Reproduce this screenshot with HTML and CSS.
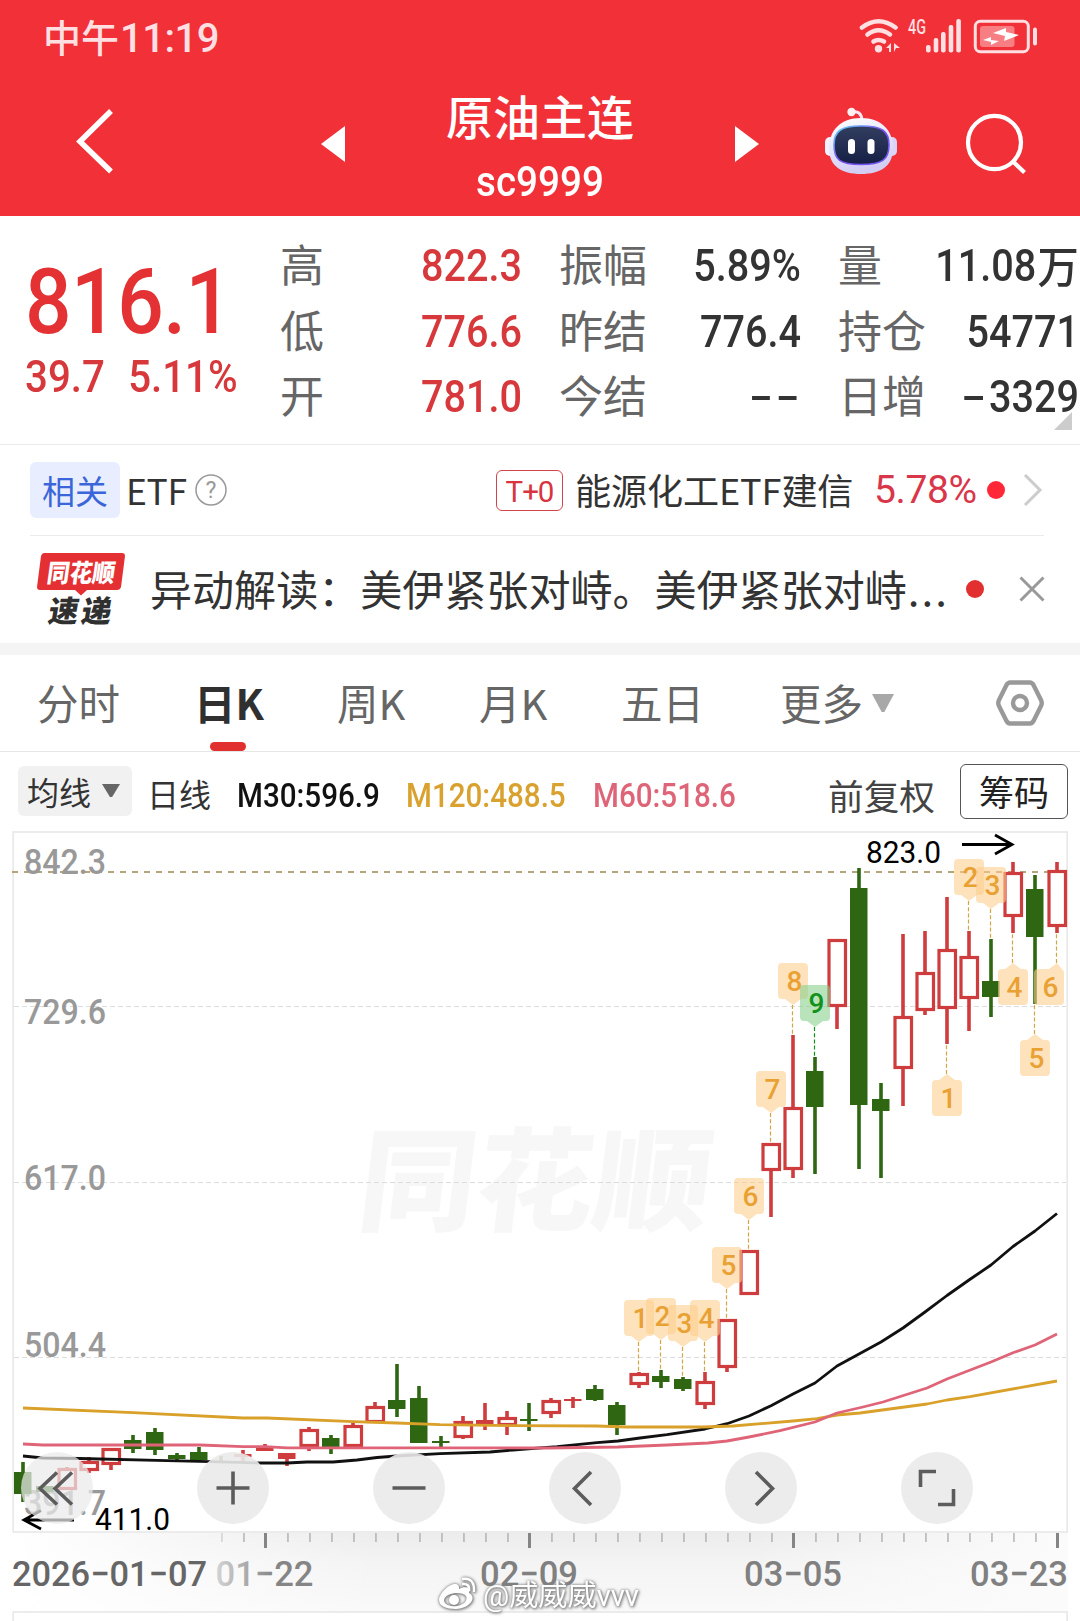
FILE: index.html
```html
<!DOCTYPE html>
<html lang="zh-CN">
<head>
<meta charset="utf-8">
<title>原油主连 sc9999</title>
<link rel="stylesheet" href="styles.css">
</head>
<body>
<header class="top">
  <div class="status">
    <div class="clock"><span>中午</span><span class="clock-time">11:19</span></div>
    <svg class="status-icons" width="182" height="40" viewBox="858 16 182 40">
      <g fill="none" stroke="#ffdfe1" stroke-width="4.6" stroke-linecap="round">
        <path d="M862 27.500Q878.500 15 895.500 27.500"/><path d="M867.500 34.500Q878.500 26 890 34.500"/><path d="M873.500 41.500Q878.500 38.500 884 41.500"/>
      </g>
      <g fill="#ffdfe1">
        <circle cx="878.500" cy="48.700" r="3.700"/>
        <path d="M886 48l5-5v9h-2v-4zM894 43l6 5h-4l-2 4z"/>
        <text x="908" y="34" class="net" textLength="18" lengthAdjust="spacingAndGlyphs">4G</text>
        <rect x="926" y="45" width="4.600" height="7.500" rx="2"/><rect x="933.700" y="38" width="4.600" height="14.500" rx="2"/><rect x="941" y="32" width="4.600" height="20.500" rx="2"/><rect x="948.700" y="25" width="4.600" height="27.500" rx="2"/><rect x="956.300" y="19" width="4.600" height="33.500" rx="2"/>
        <rect x="980" y="26" width="34.500" height="21" rx="3" opacity=".45"/>
        <path d="M993 33l13-5v4l13 3-15 6 1-5zM983 40l8-3v3l8 1-8 4v-3z" fill="#fff"/>
        <rect x="1033" y="27.500" width="4" height="18" rx="2"/>
      </g>
      <rect x="975.300" y="21.300" width="53" height="30.400" rx="5" fill="none" stroke="#ffdfe1" stroke-width="3"/>
    </svg>
  </div>
  <nav class="titlebar">
    <svg class="back" width="40" height="68" viewBox="74 107 40 68"><path d="M111 111L80 141.500L111 171.500" fill="none" stroke="#fff" stroke-width="5.500"/></svg>
    <svg class="prev" width="24" height="36" viewBox="0 0 24 36"><path d="M24 0V36L0 18z" fill="#fff"/></svg>
    <div class="title"><h1>原油主连</h1><div class="code">sc9999</div></div>
    <svg class="next" width="24" height="36" viewBox="0 0 24 36"><path d="M0 0V36L24 18z" fill="#fff"/></svg>
    <svg class="robot" width="74" height="70" viewBox="824 106 74 70">
      <defs>
        <linearGradient id="shell" x1="0" y1="0" x2="0.300" y2="1"><stop offset="0" stop-color="#fff"/><stop offset=".6" stop-color="#e3e3fb"/><stop offset="1" stop-color="#d3cdf3"/></linearGradient>
        <linearGradient id="rim" x1="0" y1="0" x2="1" y2="1"><stop offset="0" stop-color="#5ed7f2"/><stop offset=".5" stop-color="#7c4df0"/><stop offset="1" stop-color="#6d5cf2"/></linearGradient>
        <linearGradient id="visor" x1="0" y1="0" x2="0" y2="1"><stop offset="0" stop-color="#323e60"/><stop offset="1" stop-color="#151f45"/></linearGradient>
      </defs>
      <path d="M852 112Q861 110 862 120" fill="none" stroke="#fbe7f4" stroke-width="3"/><circle cx="851.500" cy="112" r="4.200" fill="#fff0f4"/>
      <rect x="825" y="137" width="10" height="19" rx="5" fill="#f4f1ff"/><rect x="887" y="137" width="10" height="19" rx="5" fill="#dcd4f8"/>
      <path d="M861 118C882 118 893 131 893 148C893 166 881 174 861 174S829 166 829 148C829 131 840 118 861 118z" fill="url(#shell)"/>
      <path d="M861 126C882 126 889 131 889 145C889 160 882 164.500 861 164.500S834 160 834 145C834 131 841 126 861 126z" fill="url(#visor)" stroke="url(#rim)" stroke-width="1.600"/>
      <rect x="848" y="139" width="7" height="15" rx="3.500" fill="#fff"/><rect x="867.500" y="139" width="7" height="15" rx="3.500" fill="#fff"/>
    </svg>
    <svg class="search" width="64" height="64" viewBox="964 112 64 64"><g fill="none" stroke="#fff" stroke-width="4.200"><ellipse cx="994.500" cy="142.500" rx="26.500" ry="26.700"/><path d="M1013 161.500L1024.500 172.500"/></g></svg>
  </nav>
</header>

<section class="quote">
  <div class="price">
    <div class="last">816.1</div>
    <div class="change"><span>39.7</span><span>5.11%</span></div>
  </div>
  <dl class="stats">
    <dt>高</dt><dd class="up">822.3</dd><dt>振幅</dt><dd>5.89%</dd><dt>量</dt><dd>11.08<span class="unit">万</span></dd>
    <dt>低</dt><dd class="up">776.6</dd><dt>昨结</dt><dd>776.4</dd><dt>持仓</dt><dd>54771</dd>
    <dt>开</dt><dd class="up">781.0</dd><dt>今结</dt><dd class="empty"><i></i><i></i></dd><dt>日增</dt><dd><i class="minus"></i>3329</dd>
  </dl>
  <i class="corner"></i>
</section>

<section class="etf">
  <span class="tag">相关</span><span class="etf-label">ETF</span>
  <svg class="help" width="34" height="34" viewBox="0 0 34 34"><circle cx="17" cy="17" r="15" fill="none" stroke="#999" stroke-width="1.500"/><text x="17" y="25" text-anchor="middle" class="q">?</text></svg>
  <span class="t0">T+0</span><span class="etf-name">能源化工ETF建信</span><span class="etf-pct">5.78%</span><i class="dot bright"></i>
  <svg class="chev" width="20" height="34" viewBox="0 0 20 34"><path d="M2 2L17 17L2 32" fill="none" stroke="#ccc" stroke-width="3"/></svg>
</section>

<section class="news">
  <svg class="brand" width="90" height="76" viewBox="36 551 90 76">
    <path d="M44 553H122Q125 553 125 556L121 587Q120 590 117 590H87L81 595.500L75 590H40Q37 590 37 587L41 556Q42 553 44 553z" fill="#e53033"/>
    <text class="brand-text" transform="translate(46 582) skewX(-8)" fill="#fff" font-size="25" textLength="68" lengthAdjust="spacingAndGlyphs">同花顺</text>
    <text class="brand-text" transform="translate(47 621.500) skewX(-10)" fill="#303030" font-size="30" textLength="63" lengthAdjust="spacing">速递</text>
  </svg>
  <span class="headline">异动解读：美伊紧张对峙。美伊紧张对峙<span class="more">...</span></span>
  <i class="dot"></i>
  <svg class="close" width="26" height="26" viewBox="0 0 26 26"><path d="M1.500 1.500L24.500 24.500M24.500 1.500L1.500 24.500" stroke="#999" stroke-width="3"/></svg>
</section>

<nav class="tabs">
  <span class="tab">分时</span><span class="tab active">日K</span><span class="tab">周K</span><span class="tab">月K</span><span class="tab">五日</span>
  <span class="tab">更多<i class="caret"></i></span>
  <svg class="gear" width="50" height="48" viewBox="995 679 50 48"><g fill="none" stroke="#999" stroke-width="4.400"><path d="M1010 682.500H1030Q1032 682.500 1033.500 685L1041 700Q1042.500 703 1041 706L1033.500 721Q1032 723.500 1030 723.500H1010Q1008 723.500 1006.500 721L999 706Q997.500 703 999 700L1006.500 685Q1008 682.500 1010 682.500z" stroke-linejoin="round"/><circle cx="1020" cy="703" r="7"/></g></svg>
</nav>

<section class="indicators">
  <span class="ma-select">均线<i class="caret dark"></i></span>
  <span class="period">日线</span>
  <span class="ma m30">M30:596.9</span><span class="ma m120">M120:488.5</span><span class="ma m60">M60:518.6</span>
  <span class="adjust">前复权</span><span class="chips">筹码</span>
</section>

<svg class="chart" id="chart" width="1080" height="796" viewBox="0 825 1080 796">
  <defs>
    <linearGradient id="shade" x1="0" y1="0" x2="0" y2="1"><stop offset="0" stop-color="#ececec"/><stop offset=".35" stop-color="#f4f4f4"/><stop offset="1" stop-color="#fafafa"/></linearGradient>
    <linearGradient id="sides" x1="0" y1="0" x2="1" y2="0"><stop offset="0" stop-color="#fff"/><stop offset=".35" stop-color="#fff" stop-opacity="0"/><stop offset=".7" stop-color="#fbfbfb" stop-opacity="0"/><stop offset="1" stop-color="#fbfbfb"/></linearGradient>
    <linearGradient id="datefade" x1="0" y1="0" x2="1" y2="0"><stop offset="0" stop-color="#d4d4d4"/><stop offset=".6" stop-color="#858585"/></linearGradient>
  </defs>
  <rect x="13" y="1533" width="1055" height="88" fill="url(#shade)"/><rect x="13" y="1533" width="1055" height="88" fill="url(#sides)"/>
  <rect x="14" y="1613" width="1052" height="10" fill="#fff"/>
  <g fill="none" stroke="#e9e9e9" stroke-width="1.700"><rect x="13.200" y="832" width="1054" height="700"/><rect x="13.200" y="1612" width="1054" height="20"/></g>
  <text class="logo-mark" transform="translate(355 1222) skewX(-7)" textLength="352" lengthAdjust="spacingAndGlyphs">同花顺</text>
  <g stroke="#dcdcdc" stroke-width="1" stroke-dasharray="5 3"><path d="M14 1006.500H1066M14 1182.500H1066M14 1357.500H1066"/></g>
  <path d="M12 872H1066" stroke="#b5a47c" stroke-width="2" stroke-dasharray="6 6"/>
  <g class="scale">
    <text x="24" y="874" textLength="82" lengthAdjust="spacingAndGlyphs">842.3</text><text x="24" y="1024" textLength="82" lengthAdjust="spacingAndGlyphs">729.6</text><text x="24" y="1190" textLength="82" lengthAdjust="spacingAndGlyphs">617.0</text><text x="24" y="1357" textLength="82" lengthAdjust="spacingAndGlyphs">504.4</text><text x="24" y="1515" textLength="82" lengthAdjust="spacingAndGlyphs">391.7</text>
  </g>
  <g id="ticks"></g>
  <g id="candles"></g>
  <g fill="none" stroke-width="2.800" stroke-linejoin="round">
    <path stroke="#111" d="M23 1456L43 1458L80 1458.500L167 1460.700L210 1461.700L260 1463L287 1463L307 1462L333 1462L357 1460L377 1457.500L397 1456L440 1453.700L490 1452L513 1450L557 1446.700L597 1442.700L618 1441L640 1438L667 1434.700L705 1429L727 1423.700L749 1416L771 1405.700L793 1394L815 1383L837 1366L881 1342L903 1328L925 1312L947 1295.500L969 1280L991 1265L1013 1246.500L1035 1231L1057 1213.500"/>
    <path stroke="#d9a02a" d="M23 1408L133 1412.700L243 1418L267 1418L353 1421.700L397 1423L440 1424.700L513 1425.700L597 1426L627 1427L703 1427L733 1426L793 1421L817 1418.700L837 1415L860 1413L927 1404L947 1400L970 1396.700L1057 1381"/>
    <path stroke="#df6478" d="M23 1444L43 1445L200 1445L243 1446.700L265 1446.700L287 1447.800L547 1448L618 1447L667 1445L708 1443L727 1441L749 1437L780 1430.700L815 1422L837 1413L863 1407L883 1402L927 1388L947 1379L991 1362L1013 1352.700L1035 1345L1057 1334"/>
  </g>
  <g id="markers"></g>
  <g class="extreme">
    <text x="866" y="863" textLength="75" lengthAdjust="spacingAndGlyphs">823.0</text><path d="M962 844.500H1012M995 835L1012 844.500L995 854"/>
    <text x="95" y="1530" textLength="75" lengthAdjust="spacingAndGlyphs">411.0</text><path d="M74 1520H24M41 1510.500L24 1520L41 1529"/>
  </g>
  <g fill="#eaeaea" fill-opacity=".72"><circle cx="57" cy="1488" r="36"/></g>
  <g fill="#eaeaea" fill-opacity=".9"><circle cx="233" cy="1488" r="36"/><circle cx="409" cy="1488" r="36"/><circle cx="585" cy="1488" r="36"/><circle cx="761" cy="1488" r="36"/><circle cx="937" cy="1488" r="36"/></g>
  <g fill="none" stroke="#5c5c5c" stroke-width="3.600">
    <path d="M57 1472.500L40 1488.500L57 1504.500M72 1472.500L55 1488.500L72 1504.500"/>
    <path d="M216.500 1488H249.500M233 1471.500V1504.500M392.500 1488H425.500M591 1472L574.500 1488.500L591 1505M756 1472L772.500 1488.500L756 1505"/>
    <path d="M920.500 1487V1471.500H936M953.500 1489V1504.500H938"/>
  </g>
  <g class="dates">
    <text x="12" y="1586" textLength="195" lengthAdjust="spacingAndGlyphs" fill="#666">2026−01−07</text>
    <text x="215.500" y="1586" textLength="98" lengthAdjust="spacingAndGlyphs" fill="url(#datefade)">01−22</text>
    <text x="480" y="1586" textLength="98" lengthAdjust="spacingAndGlyphs">02−09</text>
    <text x="744" y="1586" textLength="98" lengthAdjust="spacingAndGlyphs">03−05</text>
    <text x="970" y="1586" textLength="98" lengthAdjust="spacingAndGlyphs">03−23</text>
  </g>
  <g class="credit">
    <path fill-rule="evenodd" d="M439 1600C439 1594 449 1583 456 1584C460 1585 459 1589 459 1589C465 1586 471 1587 469 1593C477 1597 471 1608 456 1609C446 1609 439 1606 439 1600zM444 1600C444 1605 451 1607 457 1606C464 1605 468 1600 466 1596C463 1591 445 1592 444 1600z"/>
    <circle cx="454" cy="1600" r="5"/>
    <path d="M462 1584Q470 1583 469 1591M462 1579Q475 1577 474 1592" fill="none" stroke="#fff" stroke-width="2.500"/>
    <text x="483" y="1606" textLength="156" lengthAdjust="spacingAndGlyphs">@威威威vvv</text>
  </g>
</svg>
<script src="chart.js"></script>
</body>
</html>
```
FILE: styles.css
```css
* { box-sizing: border-box; }
body { margin: 0; width: 1080px; height: 1621px; overflow: hidden; background: #fff; color: #333; font-family: "Noto Sans CJK SC", sans-serif; }
svg { display: block; flex: none; }
i { display: block; flex: none; font-style: normal; }
.top { height: 216px; background: #f13038; color: #fff; overflow: hidden; }
.status { display: flex; justify-content: space-between; height: 72px; padding: 16px 40px 0 43px; }
.clock { display: flex; color: #ffdfe1; font-size: 38px; font-weight: 500; line-height: 40px; }
.clock-time { margin-left: 1px; font-family: Roboto, sans-serif; font-size: 40px; line-height: 46px; font-weight: 500; letter-spacing: -.5px; }
.net { font: 500 21px Roboto, sans-serif; }
.titlebar { display: flex; align-items: flex-start; padding-left: 74px; }
.back { margin-top: 35px; }
.prev { margin: 54px 0 0 207px; }
.title { width: 390px; text-align: center; margin-top: 12px; }
.title h1 { margin: 0; font-size: 47px; line-height: 62px; font-weight: 500; }
.code { font: 500 42px/62px Roboto, sans-serif; transform: scaleX(.92); margin-top: 5px; }
.next { margin-top: 54px; }
.robot { margin: 34px 0 0 65px; }
.search { margin: 40px 0 0 66px; }

.quote { position: relative; display: flex; height: 229px; border-bottom: 1.500px solid #ebebeb; }
.price { width: 280px; padding: 39px 0 0 25px; color: #e33134; font-family: Roboto, sans-serif; font-weight: 500; }
.last { font-size: 91px; line-height: 94px; transform: scaleX(.9); transform-origin: left; letter-spacing: -.5px; }
.change { display: flex; gap: 26px; font-size: 45px; line-height: 56px; font-weight: 500; color: #d7383c; transform: scaleX(.895); transform-origin: left; }
.stats { display: grid; grid-template-columns: 110px 132px 148px 131px 100px 179px; grid-auto-rows: 65.500px; margin: 0; padding-top: 17px; }
.stats dt { font-size: 44px; line-height: 61px; color: #666; font-weight: 400; }
.stats dt:nth-of-type(3n + 2) { padding-left: 37px; }
.stats dt:nth-of-type(3n) { padding-left: 37px; white-space: nowrap; }
.stats dd { margin: 0; font: 500 44.500px/65px Roboto, sans-serif; text-align: right; white-space: nowrap; transform: scaleX(.89); transform-origin: right; display: flex; justify-content: flex-end; align-items: center; padding-top: 2px; }
.stats dd:nth-of-type(3n) { padding-right: 1px; }
.stats .up { color: #d7383c; }
.unit { font-family: "Noto Sans CJK SC", sans-serif; font-size: 43px; line-height: 60px; transform: scaleX(1.080); margin: -6px 2px 0 3px; }
.empty { gap: 10px; padding-right: 5px; }
.empty i { width: 20px; height: 4px; background: #333; }
.minus { width: 21px; height: 4px; background: #333; margin-right: 7px; }
.corner { position: absolute; left: 1054px; top: 196px; border-left: 18px solid transparent; border-bottom: 18px solid #ccc; }

.etf { display: flex; align-items: center; height: 91px; margin: 0 36px 0 30px; border-bottom: 1.500px solid #ebebeb; }
.tag { width: 90px; height: 56px; border-radius: 6px; background: #e8eeff; color: #3b66d9; font-size: 33px; line-height: 56px; text-align: center; }
.etf-label { width: 65px; padding-left: 6px; font-size: 35.500px; line-height: 56px; letter-spacing: -.3px; }
.help { margin-left: 9px; }
.q { font: 23px Roboto, sans-serif; fill: #999; }
.t0 { margin-left: 268px; width: 67px; height: 41px; border: 1.500px solid #d2444c; border-radius: 6px; color: #d93340; font: 400 29.500px/42px Roboto, sans-serif; letter-spacing: -1px; text-align: center; }
.etf-name { flex: none; width: 310px; padding-left: 12px; font-size: 36.100px; line-height: 54px; height: 56px; white-space: nowrap; letter-spacing: -.1px; }
.etf-pct { flex: none; width: 114px; font: 400 39px/60px Roboto, sans-serif; letter-spacing: -.4px; color: #d9364a; padding-left: 1px; }
.dot { width: 18px; height: 18px; border-radius: 50%; background: #e23030; }
.bright { background: #ff2838; }
.chev { margin-left: 18px; }

.news { display: flex; align-items: center; height: 119px; padding-left: 36px; border-bottom: 12px solid #f4f4f4; }
.brand { margin-top: -1px; overflow: visible; }
.brand-text { font-family: "Noto Sans CJK SC", sans-serif; font-weight: 900; }
.headline { width: 816px; padding-left: 24px; font-size: 42.050px; line-height: 60px; margin-top: -3px; white-space: nowrap; }
.more { letter-spacing: 2px; padding-left: 1px; }
.news .dot { margin-left: 24px; margin-top: -2px; }
.close { margin: -2px 0 0 35px; }

.tabs { display: grid; grid-template-columns: 158px 142px 142px 142px 159px 215px 50px; height: 97px; padding: 0 0 0 37px; border-bottom: 1.500px solid #e6e6e6; }
.tab { display: flex; font-size: 41.500px; line-height: 95px; color: #666; font-weight: 400; white-space: nowrap; }
.active { position: relative; left: -1px; color: #303030; font-weight: 700; }
.active::after { content: ""; position: absolute; left: 16px; bottom: 0; width: 36px; height: 9px; border-radius: 5px; background: #e23030; }
.caret { margin: 39px 0 0 9px; width: 22px; height: 18px; background: #a8a8a8; clip-path: polygon(0 0, 100% 0, 56% 100%, 44% 100%); }
.gear { margin-top: 24px; }

.indicators { display: flex; height: 73px; align-items: flex-start; padding-left: 18px; white-space: nowrap; }
.ma-select { display: flex; width: 114px; height: 50px; margin-top: 14px; padding-left: 9px; border-radius: 6px; background: #f1f1f1; font-size: 32px; line-height: 50px; }
.dark { width: 18px; height: 13px; margin: 18px 0 0 11px; background: #666; }
.period { width: 90px; margin-left: 15px; margin-top: 15px; font-size: 32px; line-height: 52px; }
.ma { width: 144px; margin: 24px 25px 0 0; font: 500 33px/40px Roboto, sans-serif; transform: scaleX(.897); transform-origin: left; }
.m30 { color: #111; }
.m120 { color: #d9a12d; width: 162px; }
.m60 { color: #de6478; }
.adjust { margin-left: 66px; margin-top: 17px; width: 132px; font-size: 35.700px; line-height: 52px; color: #444; }
.chips { width: 108px; height: 55px; margin-top: 12px; border: 1.500px solid #555; border-radius: 6px; font-size: 35px; line-height: 52px; text-align: center; color: #222; }

.chart text { font-family: Roboto, sans-serif; }
.chart .logo-mark { font: 900 112px "Noto Sans CJK SC", sans-serif; fill: #f7f7f7; }
.scale text { font-size: 35px; font-weight: 500; fill: #999; }
.extreme text { font-size: 31px; fill: #000; }
.extreme path { fill: none; stroke: #000; stroke-width: 2.800; }
.dates { font-size: 35.500px; font-weight: 500; fill: #808080; }
.markers-text { font-size: 28px; font-weight: 500; text-anchor: middle; }
.credit { fill: #fff; filter: drop-shadow(0 0 1.500px #777) drop-shadow(1px 1px 1px #999); }
.chart .credit text { font: 29px Roboto, "Noto Sans CJK SC", sans-serif; }
```
FILE: chart.js
```js
// Candles, left to right: [direction, high, body top, body bottom, low]
const candles = [
  ["d",1462,1472,1494,1502],["d",1486,1486,1492,1492],["u",1467,1468,1490,1490],["u",1457,1461,1471,1473],
  ["u",1448,1448,1465,1470],["d",1435,1440,1449,1453],["d",1428,1432,1450,1455],["d",1453,1455,1459,1460],
  ["d",1447,1452,1460,1460],["d",1456,1461,1463,1463],["u",1450,1454,1457,1461],["u",1444,1446,1451,1451],
  ["u",1453,1453,1459,1466],["u",1427,1429,1447,1451],["d",1435,1438,1447,1454],["u",1423,1425,1447,1447],
  ["u",1402,1406,1423,1423],["d",1364,1400,1409,1417],["d",1386,1398,1443,1443],["d",1436,1441,1443,1447],
  ["u",1416,1421,1438,1439],["u",1403,1420,1424,1430],["u",1411,1417,1426,1435],["d",1403,1419,1421,1431],
  ["u",1398,1400,1414,1418],["u",1397,1399,1401,1408],["d",1385,1389,1400,1401],["d",1402,1405,1425,1435],
  ["u",1372,1373,1385,1388],["d",1370,1376,1382,1388],["d",1377,1379,1389,1391],["u",1372,1381,1405,1409],
  ["u",1319,1319,1368,1372],["u",1250,1250,1295,1295],["u",1143,1143,1171,1217],["u",1035,1107,1170,1178],
  ["d",1057,1071,1107,1174],["u",939,939,1007,1029],["d",868,888,1105,1169],["d",1083,1099,1111,1178],
  ["u",934,1016,1069,1106],["u",931,972,1011,1015],["u",897,949,1009,1044],["u",931,956,999,1031],
  ["d",939,981,997,1017],["u",862,872,917,933],["d",875,889,937,1004],["u",862,870,927,933]
];
const x = i => 23 + 22 * i;
let out = "";
candles.forEach(([dir, hi, top, bot, lo], i) => {
  const color = dir === "u" ? "#cf3c3e" : "#2f6612";
  if (hi < top) out += `<rect x="${x(i) - 1.8}" y="${hi}" width="3.600" height="${top - hi}" fill="${color}"/>`;
  if (lo > bot) out += `<rect x="${x(i) - 1.8}" y="${bot}" width="3.600" height="${lo - bot}" fill="${color}"/>`;
  if (dir === "u" && bot - top > 7)
    out += `<rect x="${x(i) - 8}" y="${top + 1.5}" width="16.500" height="${bot - top - 3}" fill="#fff" stroke="${color}" stroke-width="3.200"/>`;
  else
    out += `<rect x="${x(i) - 9}" y="${top}" width="17.500" height="${bot - top}" fill="${color}"/>`;
});
document.getElementById("candles").innerHTML = out;

// Ticks on the date axis, with a heavier one every twelve sessions
out = "";
for (let i = 9; i < 48; i++) {
  const major = i % 12 === 11;
  out += `<rect x="${x(i) + (major ? -1 : .3)}" y="1533" width="${major ? 3 : 1.3}" height="${major ? 15 : 9}" fill="${i < 10 ? "#ccc" : major ? "#858585" : "#aaa"}"/>`;
}
document.getElementById("ticks").innerHTML = out;

// Sequence markers: [candle, number, above the candle, box shift]
const marks = [[28,1,1],[29,2,1],[30,3,1],[31,4,1],[32,5,1],[33,6,1],[34,7,1],[35,8,1],[36,9,1],[42,1,0],[43,2,1],[44,3,1],[45,4,0],[46,5,0],[47,6,0,-8]];
out = "";
marks.forEach(([i, n, above, shift = 0]) => {
  const cx = x(i), bx = cx - 15 + shift;
  const box = n === 9 ? "#85cf8a" : "#fdcd8c";
  const ink = n === 9 ? "#12921a" : "#e9a133";
  const y = above ? candles[i][1] - 72 : candles[i][4] + 36;
  const tip = above ? y + 42 : y - 6;
  const l = Math.max(cx - 8, bx + 2), r = Math.min(cx + 8, bx + 28);
  const end = above ? candles[i][1] : candles[i][4];
  // The box and its pointer are one outline, so their fill stays even
  const outline = above
    ? `M${bx + 4} ${y}h22q4 0 4 4v28q0 4-4 4H${r}L${cx} ${tip}L${l} ${y + 36}H${bx + 4}q-4 0-4-4v-28q0-4 4-4z`
    : `M${bx + 4} ${y}H${l}L${cx} ${tip}L${r} ${y}H${bx + 26}q4 0 4 4v28q0 4-4 4h-22q-4 0-4-4v-28q0-4 4-4z`;
  out += `<path d="M${cx - .5} ${tip}V${end}" stroke="${n === 9 ? "#12921a" : "#d3a546"}" stroke-width="1.200" stroke-dasharray="4 2.200"/>`;
  out += `<path d="${outline}" fill="${box}" opacity=".58"/>`;
  out += `<text class="markers-text" x="${cx + 1.5 + shift}" y="${y + 27.500}" fill="${ink}">${n}</text>`;
});
document.getElementById("markers").innerHTML = out;
```
